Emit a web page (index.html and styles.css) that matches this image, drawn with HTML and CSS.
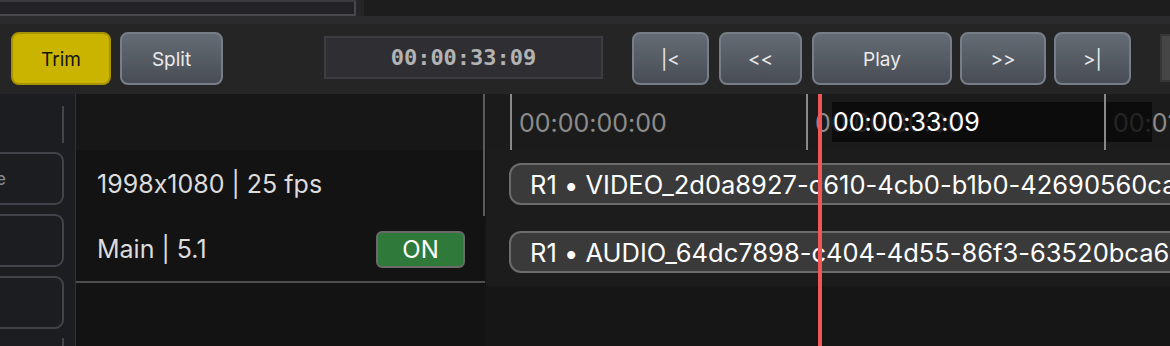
FILE: index.html
```html
<!DOCTYPE html>
<html>
<head>
<meta charset="utf-8">
<link rel="stylesheet" href="styles.css">
</head>
<body>
<div class="app">
  <div class="topstrip">
    <div class="prev-panel"></div>
    <div class="prev-gap"></div>
    <div class="prev-right"></div>
  </div>
  <div class="subbar"></div>
  <div class="toolbar">
    <button class="btn btn-trim">Trim</button>
    <button class="btn btn-split">Split</button>
    <div class="timecode">00:00:33:09</div>
    <div class="transport">
      <button class="btn tbtn w-start">|&lt;</button>
      <button class="btn tbtn w-rew">&lt;&lt;</button>
      <button class="btn tbtn w-play">Play</button>
      <button class="btn tbtn w-ff">&gt;&gt;</button>
      <button class="btn tbtn w-end">&gt;|</button>
    </div>
    <div class="edge-box"></div>
  </div>
  <div class="workspace">
    <aside class="sidebar">
      <div class="side-line"></div>
      <div class="side-btn"><span>Mode</span></div>
      <div class="side-btn"></div>
      <div class="side-btn"></div>
      <div class="side-line bottom"></div>
    </aside>
    <section class="tracklist">
      <div class="tl-header"></div>
      <div class="tl-row">1998x1080 | 25 fps</div>
      <div class="tl-row tl-audio">
        <span>Main | 5.1</span>
        <span class="badge-on">ON</span>
      </div>
      <div class="tl-rest"></div>
      <div class="scroll-thumb"></div>
    </section>
    <section class="timeline">
      <div class="ruler">
        <div class="tick" style="left:24px"></div>
        <div class="tick-label" style="left:33px">00:00:00:00</div>
        <div class="tick" style="left:320px"></div>
        <div class="tick-label" style="left:329px">00:00:30:00</div>
        <div class="tick" style="left:618px"></div>
        <div class="tick-label" style="left:627px">00:01:00:00</div>
        <div class="play-time">00:00:33:09</div>
      </div>
      <div class="tracks">
        <div class="track">
          <div class="clip">R1 • VIDEO_2d0a8927-c610-4cb0-b1b0-42690560ca11</div>
        </div>
        <div class="track">
          <div class="clip">R1 • AUDIO_64dc7898-c404-4d55-86f3-63520bca6e02</div>
        </div>
      </div>
      <div class="tl-empty"></div>
      <div class="playhead"></div>
    </section>
  </div>
</div>
</body>
</html>
```
FILE: styles.css
```css
* { box-sizing: border-box; }
html, body {
  margin: 0;
  padding: 0;
  background: #1e1e1e;
  width: 1170px;
  height: 346px;
  overflow: hidden;
  font-family: "Inter", "Noto Sans", sans-serif;
  font-feature-settings: "calt" 0;
}
.app {
  display: flex;
  flex-direction: column;
  width: 1170px;
  height: 346px;
}
.topstrip {
  display: flex;
  height: 16px;
  flex-shrink: 0;
  background: #1f1f20;
}
.prev-panel {
  width: 356px;
  height: 16px;
  background: #232326;
  border-right: 2px solid #48484d;
  border-bottom: 2px solid #48484d;
  border-top: 2px solid #3a3a3e;
}
.prev-gap {
  width: 8px;
  background: #262628;
}
.prev-right {
  flex: 1;
  background: #1d1d1e;
}
.subbar {
  height: 8px;
  flex-shrink: 0;
  background: #2b2b2d;
}
.toolbar {
  height: 70px;
  flex-shrink: 0;
  background: #252526;
  display: flex;
  align-items: flex-start;
  padding: 8px 0 0 11px;
  overflow: hidden;
}
.toolbar > * { flex-shrink: 0; }
.btn {
  font-family: "Inter", "Noto Sans", sans-serif;
  font-feature-settings: "calt" 0;
  font-size: 19px;
  height: 53px;
  border-radius: 8px;
  padding: 2px 0 0 0;
  cursor: pointer;
  flex-shrink: 0;
}
.btn-trim {
  width: 100px;
  background: #cbb400;
  border: 2px solid #a79300;
  color: #141414;
}
.btn-split, .tbtn {
  background: linear-gradient(#656b74, #484d55);
  border: 2px solid #777e88;
  color: #ebebeb;
}
.btn-split {
  width: 103px;
  margin-left: 9px;
}
.timecode {
  margin-left: 101px;
  margin-top: 4px;
  width: 279px;
  height: 43px;
  background: #2f2f33;
  border: 2px solid #3d3d41;
  color: #b3b3b3;
  font-family: "DejaVu Sans Mono", monospace;
  font-weight: bold;
  font-size: 22px;
  display: flex;
  align-items: center;
  justify-content: center;
}
.transport {
  display: flex;
  margin-left: 29px;
}
.w-start { width: 77px; }
.w-rew { width: 83px; margin-left: 10px; }
.w-play { width: 140px; margin-left: 10px; }
.w-ff { width: 86px; margin-left: 8px; }
.w-end { width: 77px; margin-left: 8px; }
.edge-box {
  margin-left: 29px;
  margin-top: 2px;
  width: 40px;
  height: 48px;
  background: #464646;
  border: 2px solid #363636;
}
.workspace {
  flex: 1;
  display: flex;
  min-height: 0;
}
.sidebar {
  width: 76px;
  flex-shrink: 0;
  background: #1b1d21;
  border-right: 1px solid #2f3236;
  display: flex;
  flex-direction: column;
  align-items: flex-end;
  padding-right: 11px;
  overflow: hidden;
}
.side-line {
  width: 2px;
  height: 37px;
  margin-top: 12px;
  background: #42464c;
  flex-shrink: 0;
}
.side-line.bottom {
  margin-top: 9px;
  height: 20px;
}
.side-btn {
  flex-shrink: 0;
  width: 120px;
  height: 53px;
  margin-top: 9px;
  border: 2px solid #40444a;
  border-radius: 9px;
  display: flex;
  align-items: center;
  justify-content: flex-end;
  padding-right: 56px;
  color: #85888d;
  font-size: 18px;
}
.tracklist {
  position: relative;
  width: 410px;
  flex-shrink: 0;
  background: #171717;
  display: flex;
  flex-direction: column;
}
.tl-header {
  height: 56px;
  flex-shrink: 0;
}
.tl-row {
  height: 67px;
  flex-shrink: 0;
  background: #131313;
  display: flex;
  align-items: center;
  padding-left: 21px;
  padding-right: 20px;
  color: #dcdcdc;
  font-size: 25px;
}
.tl-audio {
  justify-content: space-between;
  height: 66px;
  border-bottom: 2px solid #4e4e4e;
  margin-right: 1px;
}
.badge-on {
  width: 89px;
  height: 37px;
  background: #2f7a3b;
  border: 2px solid #6a6a6a;
  border-radius: 6px;
  color: #ffffff;
  font-size: 24px;
  display: flex;
  align-items: center;
  justify-content: center;
}
.tl-rest {
  flex: 1;
  background: #131313;
}
.scroll-thumb {
  position: absolute;
  right: 1px;
  top: 0;
  width: 2px;
  height: 122px;
  background: #5c5c5c;
}
.timeline {
  position: relative;
  flex: 1;
  display: flex;
  flex-direction: column;
  overflow: hidden;
  background: #161616;
}
.ruler {
  position: relative;
  height: 56px;
  flex-shrink: 0;
  background: #1b1b1b;
}
.tick {
  position: absolute;
  top: 0;
  bottom: 0;
  width: 2px;
  background: #8a8a8a;
  z-index: 2;
}
.tick-label {
  position: absolute;
  top: 14px;
  color: #8c8c8c;
  font-size: 25px;
  line-height: 30px;
  white-space: nowrap;
}
.play-time {
  position: absolute;
  left: 346px;
  top: 8px;
  width: 320px;
  height: 40px;
  background: rgba(8, 8, 8, 0.78);
  color: #ffffff;
  font-size: 25px;
  line-height: 40px;
  padding-left: 1px;
  white-space: nowrap;
  z-index: 1;
}
.tracks {
  background: #1c1c1c;
  height: 136px;
  flex-shrink: 0;
  display: flex;
  flex-direction: column;
}
.track {
  height: 68px;
  padding: 13px 0 0 23px;
}
.clip {
  height: 42px;
  width: 720px;
  background: #3a3a3a;
  border: 2px solid #6c6c6c;
  border-radius: 12px;
  color: #ffffff;
  font-size: 25.5px;
  display: flex;
  align-items: center;
  padding-left: 19px;
  white-space: nowrap;
  overflow: hidden;
}
.tl-empty {
  flex: 1;
  background: #161616;
}
.playhead {
  position: absolute;
  left: 332px;
  top: 0;
  bottom: 0;
  width: 4px;
  background: #f05656;
  z-index: 3;
}
```
